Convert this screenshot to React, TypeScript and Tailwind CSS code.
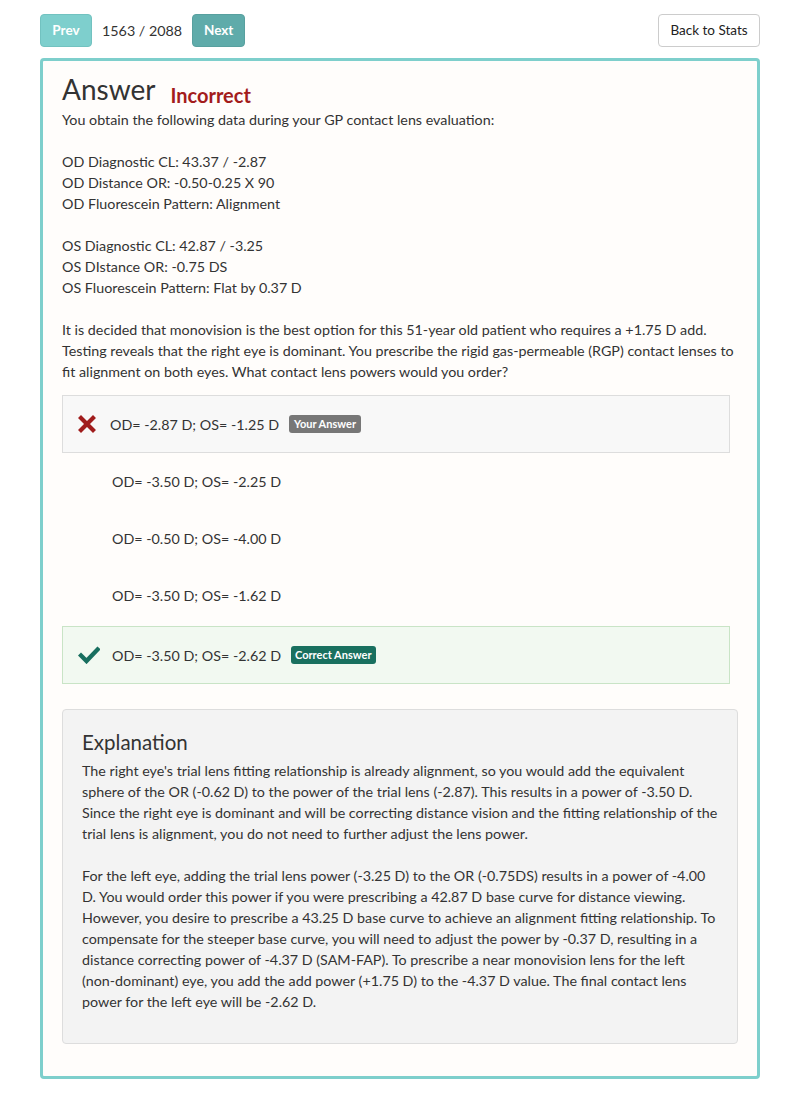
import React from "react";

const options = [
  { text: "OD= -2.87 D; OS= -1.25 D", state: "wrong" },
  { text: "OD= -3.50 D; OS= -2.25 D", state: "none" },
  { text: "OD= -0.50 D; OS= -4.00 D", state: "none" },
  { text: "OD= -3.50 D; OS= -1.62 D", state: "none" },
  { text: "OD= -3.50 D; OS= -2.62 D", state: "correct" },
];

const CrossIcon = () => (
  <svg width="18" height="18" viewBox="0 0 18 18">
    <path d="M3 3 L15 15 M15 3 L3 15" stroke="#a01c1c" strokeWidth="4.2" strokeLinecap="square" />
  </svg>
);

const CheckIcon = () => (
  <svg width="22" height="18" viewBox="0 0 22 18">
    <path d="M3 9.5 L8.5 15 L19.5 3.5" stroke="#186f5f" strokeWidth="4.4" fill="none" strokeLinecap="square" />
  </svg>
);

const OptionRow = ({ text, state }: { text: string; state: string }) => {
  const box =
    state === "wrong"
      ? "h-[58px] bg-[#f8f8f8] border-[#dddddd]"
      : state === "correct"
      ? "h-[58px] mt-[2px] bg-[#f2f9f1] border-[#c9e4c6]"
      : "h-[57px] border-transparent";
  return (
    <div className={`flex items-center border ${box}`}>
      <div className="w-[22px] ml-[15px] mr-[10px] flex items-center">
        {state === "wrong" && <CrossIcon />}
        {state === "correct" && <CheckIcon />}
      </div>
      <span className={state === "wrong" ? "" : "ml-[2px]"}>{text}</span>
      {state === "wrong" && (
        <span className="ml-[10px] bg-[#777777] text-white text-[11px] font-bold rounded-[3px] px-[5px] h-[18px] leading-[18px]">
          Your Answer
        </span>
      )}
      {state === "correct" && (
        <span className="ml-[10px] bg-[#19705f] text-white text-[11px] font-bold rounded-[3px] px-[4px] h-[18px] leading-[18px]">
          Correct Answer
        </span>
      )}
    </div>
  );
};

export default function App() {
  return (
    <div className="min-h-[1101px] bg-white text-[#333333] text-[14.3px] leading-[21px] [font-family:Lato,'Open_Sans',sans-serif]">
      <div className="px-[40px] pt-[14px] flex items-center">
        <button className="h-[33px] w-[52px] rounded-[4px] bg-[#7ecfcd] border border-[#72c2c0] text-white font-bold text-[13.5px]">
          Prev
        </button>
        <span className="ml-[10px] text-[14.3px]">1563 / 2088</span>
        <button className="ml-[10px] h-[33px] w-[53px] rounded-[4px] bg-[#5fabaa] border border-[#58a09f] text-white font-bold text-[13.5px]">
          Next
        </button>
        <button className="ml-auto h-[33px] w-[102px] rounded-[4px] bg-white border border-[#cccccc] text-[#222222] text-[13.5px]">
          Back to Stats
        </button>
      </div>

      <div className="mx-[40px] mt-[11px] border-[3px] border-[#7ecfcc] rounded-[4px] bg-[#fffdfb] px-[19px] pt-[6px] pb-[32px]">
        <div className="flex items-end h-[40px]">
          <h2 className="text-[28px] leading-[36px]">Answer</h2>
          <span className="ml-[15px] text-[#a31c1c] font-bold text-[20px] leading-[24px] mb-[0px]">
            Incorrect
          </span>
        </div>
        <div className="mt-[2px]">
          <p>You obtain the following data during your GP contact lens evaluation:</p>
          <p className="mt-[21px]">OD Diagnostic CL: 43.37 / -2.87</p>
          <p>OD Distance OR: -0.50-0.25 X 90</p>
          <p>OD Fluorescein Pattern: Alignment</p>
          <p className="mt-[21px]">OS Diagnostic CL: 42.87 / -3.25</p>
          <p>OS DIstance OR: -0.75 DS</p>
          <p>OS Fluorescein Pattern: Flat by 0.37 D</p>
          <p className="mt-[21px]">
            It is decided that monovision is the best option for this 51-year old patient who requires a +1.75 D add.
            Testing reveals that the right eye is dominant. You prescribe the rigid gas-permeable (RGP) contact lenses to
            fit alignment on both eyes. What contact lens powers would you order?
          </p>
        </div>

        <div className="mt-[13px] mr-[8px] flex flex-col">
          {options.map((o, i) => (
            <OptionRow key={i} text={o.text} state={o.state} />
          ))}
        </div>

        <div className="mt-[25px] bg-[#f3f3f3] border border-[#dddddd] rounded-[4px] px-[19px] pt-[17px] pb-[31px]">
          <h3 className="text-[20.5px] leading-[30px]">Explanation</h3>
          <p className="mt-[3px]">
            The right eye's trial lens fitting relationship is already alignment, so you would add the equivalent
            sphere of the OR (-0.62 D) to the power of the trial lens (-2.87). This results in a power of -3.50 D.
            Since the right eye is dominant and will be correcting distance vision and the fitting relationship of
            the trial lens is alignment, you do not need to further adjust the lens power.
          </p>
          <p className="mt-[21px]">
            For the left eye, adding the trial lens power (-3.25 D) to the OR (-0.75DS) results in a power of -4.00
            D. You would order this power if you were prescribing a 42.87 D base curve for distance viewing.
            However, you desire to prescribe a 43.25 D base curve to achieve an alignment fitting relationship. To
            compensate for the steeper base curve, you will need to adjust the power by -0.37 D, resulting in a
            distance correcting power of -4.37 D (SAM-FAP). To prescribe a near monovision lens for the left
            (non-dominant) eye, you add the add power (+1.75 D) to the -4.37 D value. The final contact lens
            power for the left eye will be -2.62 D.
          </p>
        </div>
      </div>
    </div>
  );
}
